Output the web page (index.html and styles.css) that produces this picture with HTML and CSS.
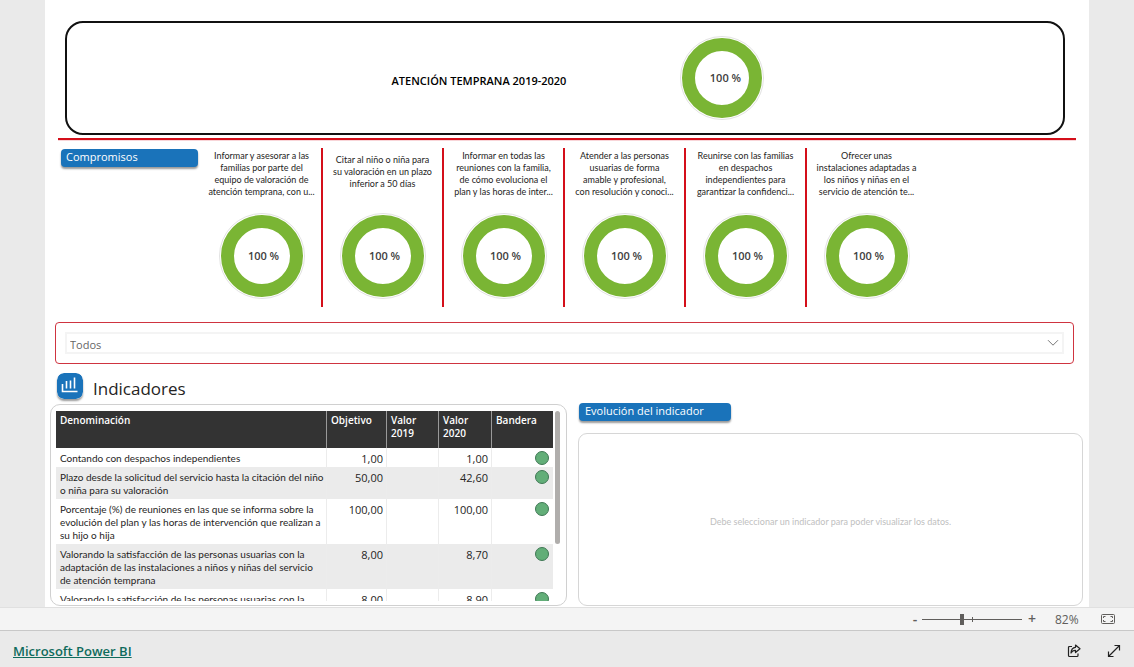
FILE: index.html
```html
<!DOCTYPE html>
<html lang="es">
<head>
<meta charset="utf-8">
<title>Atención temprana 2019-2020</title>
<link rel="stylesheet" href="styles.css">
</head>
<body>
<main class="viewport">
  <div class="report">
    <header class="summary">
      <h1 class="summary-title">ATENCIÓN TEMPRANA 2019-2020</h1>
      <div class="donut donut-small"><span>100 %</span></div>
    </header>
    <hr class="rule">

    <section class="commitments">
      <h2 class="badge">Compromisos</h2>
      <article class="commitment">
        <p class="commitment-text">Informar y asesorar a las<br>familias por parte del<br>equipo de valoración de<br>atención temprana, con u...</p>
        <div class="donut"><span>100 %</span></div>
      </article>
      <article class="commitment">
        <p class="commitment-text commitment-short">Citar al niño o niña para<br>su valoración en un plazo<br>inferior a 50 días</p>
        <div class="donut"><span>100 %</span></div>
      </article>
      <article class="commitment">
        <p class="commitment-text">Informar en todas las<br>reuniones con la familia,<br>de cómo evoluciona el<br>plan y las horas de inter...</p>
        <div class="donut"><span>100 %</span></div>
      </article>
      <article class="commitment">
        <p class="commitment-text">Atender a las personas<br>usuarias de forma<br>amable y profesional,<br>con resolución y conoci...</p>
        <div class="donut"><span>100 %</span></div>
      </article>
      <article class="commitment">
        <p class="commitment-text">Reunirse con las familias<br>en despachos<br>independientes para<br>garantizar la confidenci...</p>
        <div class="donut"><span>100 %</span></div>
      </article>
      <article class="commitment">
        <p class="commitment-text">Ofrecer unas<br>instalaciones adaptadas a<br>los niños y niñas en el<br>servicio de atención te...</p>
        <div class="donut"><span>100 %</span></div>
      </article>
    </section>

    <div class="slicer">
      <div class="slicer-field">
        <select class="slicer-select" aria-label="Compromiso">
          <option>Todos</option>
        </select>
        <svg class="slicer-arrow" width="12" height="8" viewBox="0 0 12 8" aria-hidden="true"><path d="M1 1.2 6 6.2 11 1.2" fill="none" stroke="#777" stroke-width="1"/></svg>
      </div>
    </div>

    <section class="details">
      <div class="indicators">
        <div class="indicators-head">
          <svg class="indicators-icon" width="26" height="26" viewBox="0 0 26 26" aria-hidden="true"><rect width="26" height="26" rx="7" fill="#1a73ba"/><path d="M5.500 11V18.500H20.500M9.500 8V15.500M13.500 7.500V15.500M17.500 4.500V15.500" fill="none" stroke="#fff" stroke-width="1.600"/></svg>
          <h2 class="indicators-title">Indicadores</h2>
        </div>
        <div class="table-card">
          <div class="table-clip">
            <table class="table">
              <colgroup><col class="col-name"><col class="col-goal"><col class="col-prev"><col class="col-now"><col class="col-flag"></colgroup>
              <thead>
                <tr><th>Denominación</th><th>Objetivo</th><th>Valor<br>2019</th><th>Valor<br>2020</th><th>Bandera</th></tr>
              </thead>
              <tbody>
                <tr><td>Contando con despachos independientes</td><td>1,00</td><td></td><td>1,00</td><td><span class="flag"></span></td></tr>
                <tr><td>Plazo desde la solicitud del servicio hasta la citación del niño<br>o niña para su valoración</td><td>50,00</td><td></td><td>42,60</td><td><span class="flag"></span></td></tr>
                <tr><td>Porcentaje (%) de reuniones en las que se informa sobre la<br>evolución del plan y las horas de intervención que realizan a<br>su hijo o hija</td><td>100,00</td><td></td><td>100,00</td><td><span class="flag"></span></td></tr>
                <tr><td>Valorando la satisfacción de las personas usuarias con la<br>adaptación de las instalaciones a niños y niñas del servicio<br>de atención temprana</td><td>8,00</td><td></td><td>8,70</td><td><span class="flag"></span></td></tr>
                <tr><td>Valorando la satisfacción de las personas usuarias con la</td><td>8,00</td><td></td><td>8,90</td><td><span class="flag"></span></td></tr>
              </tbody>
            </table>
          </div>
          <div class="scroll-thumb"></div>
        </div>
      </div>
      <div class="evolution">
        <h2 class="badge">Evolución del indicador</h2>
        <div class="evolution-panel"><p>Debe seleccionar un indicador para poder visualizar los datos.</p></div>
      </div>
    </section>
  </div>
</main>

<div class="zoombar">
  <button class="zoom-step" type="button" aria-label="Alejar">-</button>
  <div class="zoom-slider"><input type="range" min="0" max="100" value="40" aria-label="Zoom"></div>
  <button class="zoom-step" type="button" aria-label="Acercar">+</button>
  <span class="zoom-value">82%</span>
  <button class="icon-button" type="button" aria-label="Ajustar a la página">
    <svg width="14" height="10" viewBox="0 0 14 10" fill="none" stroke="#605e5c"><rect x=".5" y=".5" width="13" height="9" rx="1"/><path d="M2.500 4V2.500H4.500M9.500 2.500H11.500V4M11.500 6V7.500H9.500M4.500 7.500H2.500V6"/></svg>
  </button>
</div>

<footer class="footer">
  <a class="brand" href="#">Microsoft Power BI</a>
  <button class="icon-button" type="button" aria-label="Compartir">
    <svg width="14" height="14" viewBox="0 0 14 14" fill="none" stroke="#222" stroke-width="1.200" stroke-linejoin="round"><path d="M5 2.500H2.500Q1.500 2.500 1.500 3.500V11.500Q1.500 12.500 2.500 12.500H10Q11 12.500 11 11.500V9.500"/><path d="M8.500 1 13 4.800 8.500 8.500V6.300Q5.500 6.200 4 9Q4.200 3.800 8.500 3.300Z"/></svg>
  </button>
  <button class="icon-button" type="button" aria-label="Pantalla completa">
    <svg width="14" height="14" viewBox="0 0 14 14" fill="none" stroke="#222" stroke-width="1.200"><path d="M1.500 12.500 12.500 1.500M7.500 1.500H12.500V6.500M1.500 7.500V12.500H6.500"/></svg>
  </button>
</footer>
</body>
</html>
```
FILE: styles.css
```css
* {
  box-sizing: border-box;
}

body {
  margin: 0;
  height: 100vh;
  display: flex;
  flex-direction: column;
  overflow: hidden;
  background: #eaeaea;
  color: #252423;
  font-family: "Open Sans", "Noto Sans", sans-serif;
  font-size: 10px;
}

h1, h2, p {
  margin: 0;
}

button {
  border: 0;
  padding: 0;
  background: none;
  font: inherit;
  color: inherit;
}

.viewport {
  flex: 1;
  min-height: 0;
  overflow: hidden;
  padding: 0 45px;
}

.report {
  height: 100%;
  display: flex;
  flex-direction: column;
  padding-top: 21px;
  background: #fff;
}

.summary {
  display: flex;
  align-items: center;
  justify-content: center;
  gap: 116px;
  margin: 0 24px 0 20px;
  padding: 15px 0 15px 24px;
  border: 2px solid #111;
  border-radius: 18px;
}

.summary-title {
  padding-top: 5px;
  font-size: 11px;
  font-weight: 600;
  line-height: 16px;
  color: #000;
}

.donut {
  display: flex;
  align-items: center;
  justify-content: center;
  width: 82px;
  height: 82px;
  border: 13px solid #7ab534;
  border-radius: 50%;
  outline: 1px solid #e2e2e2;
  outline-offset: 1px;
  background: #fff;
  font-size: 11px;
  font-weight: 600;
  line-height: 14px;
  color: #404040;
  white-space: nowrap;
}

.donut span {
  padding-left: 4px;
}

.donut-small {
  width: 80px;
  height: 80px;
}

.donut-small span {
  padding-left: 6px;
}

.rule {
  width: auto;
  height: 3px;
  margin: 3px 13px 0;
  border: 0;
  border-bottom: 1px solid #f8d5d8;
  background: #d40f1a;
}

.commitments {
  display: grid;
  grid-template-columns: 157fr repeat(6, 121fr) 161fr;
  margin-top: 7px;
}

.badge {
  padding: 0 5px;
  height: 18px;
  border-radius: 4px;
  background: #1a73ba;
  box-shadow: 0 2px 2px #9a9a9a;
  color: #fff;
  font-size: 11px;
  font-weight: 400;
  line-height: 16px;
}

.commitments .badge {
  margin: 1px 4px 0 16px;
}

.commitment {
  display: flex;
  flex-direction: column;
  align-items: center;
  gap: 15px;
  padding: 2px 0 10px;
  border-right: 2px solid #d40f1a;
}

.commitment:last-child {
  border-right-color: transparent;
}

.commitment-text {
  height: 50px;
  font-family: Lato, "Open Sans", sans-serif;
  font-size: 9px;
  line-height: 12px;
  text-align: center;
  white-space: nowrap;
}

.commitment-short {
  padding-top: 4px;
}

.slicer {
  margin: 15px 15px 0 10px;
  padding: 9px;
  border: 1px solid #cf3440;
  border-radius: 4px;
}

.slicer-field {
  display: grid;
  align-items: center;
  border: 2px solid #f4f4f4;
}

.slicer-select {
  grid-area: 1 / 1;
  appearance: none;
  width: 100%;
  height: 18px;
  border: 0;
  padding: 2px 3px 0;
  background: #fff;
  color: #666;
  font: 11px "Open Sans", "Noto Sans", sans-serif;
}

.slicer-arrow {
  grid-area: 1 / 1;
  justify-self: end;
  margin-right: 3px;
  pointer-events: none;
}

.details {
  flex: 1;
  min-height: 0;
  display: grid;
  grid-template-columns: 517fr 505fr;
  gap: 11px;
  padding: 9px 6px 1px 5px;
}

.indicators {
  display: flex;
  flex-direction: column;
  min-height: 0;
}

.indicators-head {
  display: flex;
  gap: 10px;
  padding: 0 7px;
  height: 31px;
}

.indicators-icon {
  border-radius: 7px;
  box-shadow: 0 2px 2px #9a9a9a;
}

.indicators-title {
  padding-top: 4px;
  font-size: 17px;
  font-weight: 400;
  line-height: 24px;
}

.table-card {
  flex: 1;
  min-height: 0;
  display: flex;
  gap: 2px;
  padding: 6px 6px 4px 5px;
  border: 1px solid #d0d0d0;
  border-radius: 10px;
}

.table-clip {
  flex: 1;
  overflow: hidden;
}

.scroll-thumb {
  width: 5px;
  height: 133px;
  border-radius: 3px;
  background: #b0aeac;
}

.table {
  width: 100%;
  table-layout: fixed;
  border-collapse: separate;
  border-spacing: 0;
  line-height: 13px;
}

.col-name { width: 271px; }
.col-goal { width: 60px; }
.col-prev { width: 52px; }
.col-now { width: 53px; }

.table th {
  height: 37px;
  padding: 3px 4px 8px;
  border-right: 1px solid #999;
  background: #333;
  color: #fff;
  font-weight: 600;
  text-align: left;
  vertical-align: top;
}

.table td {
  padding: 4px 3px 2px 4px;
  border-right: 1px solid #ececec;
  vertical-align: top;
  white-space: nowrap;
}

.table td:first-child {
  font-family: Lato, "Open Sans", sans-serif;
}

.table td:not(:first-child) {
  font-size: 11px;
  text-align: right;
}

.table th:last-child,
.table td:last-child {
  border-right: 0;
}

.table tbody tr:nth-child(even) {
  background: #ebebeb;
}

.table td:last-child {
  padding: 3px 4px 0;
}

.flag {
  display: block;
  width: 14px;
  height: 14px;
  margin-left: auto;
  border: 1px solid #407855;
  border-radius: 50%;
  background: #62ae78;
}

.evolution {
  display: flex;
  flex-direction: column;
  gap: 12px;
  padding-top: 30px;
}

.evolution .badge {
  width: 152px;
  margin-left: 1px;
  padding: 0 6px;
}

.evolution-panel {
  flex: 1;
  display: grid;
  place-items: center;
  padding-top: 4px;
  border: 1px solid #d6d6d6;
  border-radius: 9px;
  color: #c0c0c0;
  font-family: Lato, "Open Sans", sans-serif;
  font-size: 9px;
}

.zoombar {
  display: flex;
  align-items: center;
  justify-content: flex-end;
  height: 23px;
  padding-right: 19px;
  border-top: 1px solid #e0e0e0;
  background: #f4f4f4;
  color: #605e5c;
  font-size: 12px;
}

.zoom-step {
  width: 14px;
  font-size: 14px;
  font-weight: 600;
  line-height: 20px;
}

.zoom-slider {
  position: relative;
  display: flex;
  width: 100px;
  margin: 0 3px 0 0;
}

.zoom-slider::after {
  content: "";
  position: absolute;
  left: 50%;
  top: 3px;
  width: 1px;
  height: 5px;
  background: #605e5c;
}

.zoom-slider input {
  appearance: none;
  width: 100%;
  height: 11px;
  margin: 0;
  background: linear-gradient(#605e5c, #605e5c) center / 100% 1px no-repeat;
}

.zoom-slider input::-webkit-slider-thumb {
  appearance: none;
  width: 4px;
  height: 11px;
  background: #605e5c;
}

.zoom-value {
  width: 62px;
  padding-left: 16px;
}

.icon-button {
  display: flex;
}

.footer {
  display: flex;
  align-items: center;
  gap: 26px;
  height: 37px;
  padding: 3px 13px 0;
  border-top: 1px solid #c8c8c8;
  background: #eaeaea;
}

.brand {
  margin-right: auto;
  color: #0f6b5c;
  font-size: 13px;
  font-weight: 600;
}
```
